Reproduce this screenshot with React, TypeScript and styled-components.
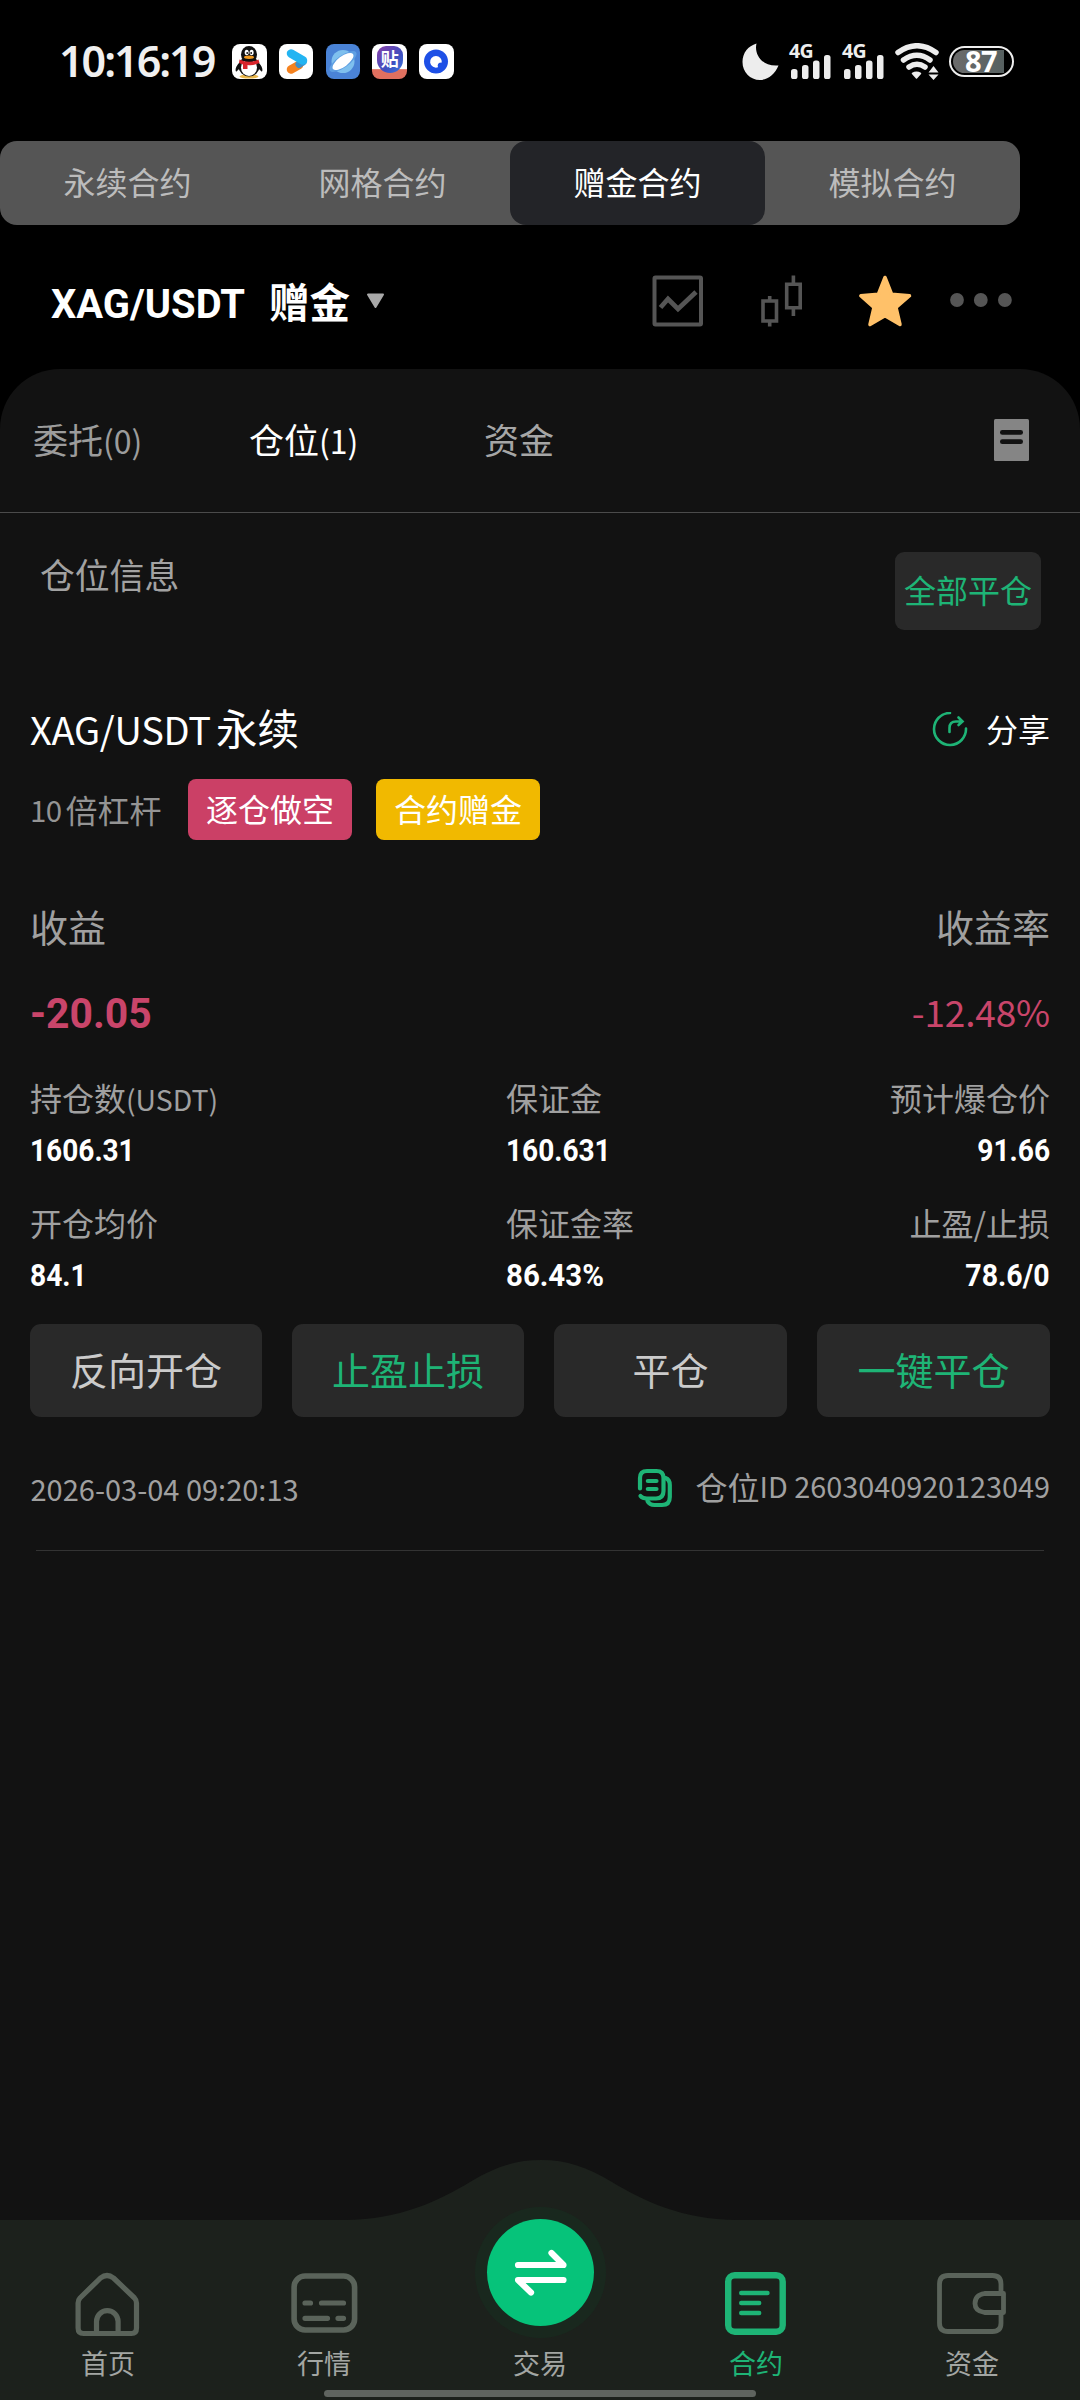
import React from "react";
import styled, { createGlobalStyle } from "styled-components";

const GREEN = "#1eb476";
const ROSE = "#c9456a";
const NAV_GREY = "#5a635a";

const GlobalStyle = createGlobalStyle`
  * { box-sizing: border-box; }
  html, body { margin: 0; padding: 0; background: #000; }
  body { font-family: "Noto Sans CJK SC", "Noto Sans", sans-serif; }
  svg { display: block; flex: none; }
`;

const Screen = styled.div`
  width: 1080px;
  height: 2400px;
  background: #000;
  display: flex;
  flex-direction: column;
  overflow: hidden;
  white-space: nowrap;
`;

/* ---------- status bar ---------- */

const StatusBar = styled.header`
  height: 122px;
  margin-bottom: 19px;
  padding: 0 66px 0 59px;
  display: flex;
  align-items: center;
  justify-content: space-between;
`;

const StatusGroup = styled.div<{ $gap: number }>`
  display: flex;
  align-items: center;
  gap: ${(p) => p.$gap}px;
`;

const Clock = styled.span`
  width: 161px;
  font: 600 43px/60px "Noto Sans", sans-serif;
  letter-spacing: -2px;
  color: #f0f0f0;
`;

const AppIcons = styled.div`
  display: flex;
  gap: 12.3px;
  margin-left: 12px;
`;

const AppTile = styled.span<{ $bg: string }>`
  width: 34.5px;
  height: 35px;
  border-radius: 8px;
  background: ${(p) => p.$bg};
  overflow: hidden;
  display: flex;
  align-items: center;
  justify-content: center;
`;

const ForumMark = styled.span`
  width: 26px;
  height: 27px;
  margin-top: -3px;
  border-radius: 9px 9px 13px 13px;
  background: linear-gradient(135deg, #8a3fa8, #3f4fc0 60%, #3a7bdf);
  color: #fff;
  font: 700 18px/25px "Noto Sans CJK SC", sans-serif;
  text-align: center;
`;

const Signal = styled.div`
  width: 43px;
  height: 36px;
  position: relative;
  svg { margin: 0 0 0 1.5px; }
`;

const SignalTag = styled.span`
  position: absolute;
  left: 0;
  top: -3px;
  font: 700 19.5px/22px "Noto Sans", sans-serif;
  letter-spacing: -0.7px;
  color: #eee;
`;

const Battery = styled.span`
  width: 65px;
  height: 31px;
  border: 2px solid #eee;
  border-radius: 16px;
  padding: 2px;
  display: flex;
`;

const BatteryFill = styled.span`
  width: 51px;
  border-radius: 12px 0 0 12px;
  background: linear-gradient(90deg, #6b6b6b, #566060);
  font: 700 29px/22px "Noto Sans", sans-serif;
  letter-spacing: -0.5px;
  padding-left: 12px;
  color: #fff;
`;

/* ---------- contract tabs ---------- */

const ContractTabs = styled.nav`
  width: 1020px;
  height: 84px;
  flex: none;
  display: flex;
  border-radius: 17px;
  background: #555;
  overflow: hidden;
`;

const ContractTab = styled.div<{ $active?: boolean }>`
  flex: 1;
  display: flex;
  align-items: center;
  justify-content: center;
  padding-bottom: 4px;
  font-size: 32px;
  line-height: 48px;
  border-radius: 16px;
  color: ${(p) => (p.$active ? "#fff" : "#bcbcbc")};
  background: ${(p) => (p.$active ? "#232428" : "transparent")};
`;

/* ---------- pair header ---------- */

const PairBar = styled.div`
  height: 144px;
  flex: none;
  padding: 8px 67px 0 51px;
  display: flex;
  align-items: center;
  justify-content: space-between;
`;

const Pair = styled.div`
  display: flex;
  align-items: center;
  color: #fff;
`;

const Condensed = styled.span<{ $size: number; $scale: number; $right?: boolean; $color?: string }>`
  display: inline-block;
  font-family: Roboto, "Liberation Sans", sans-serif;
  font-weight: 700;
  font-size: ${(p) => p.$size}px;
  line-height: 40px;
  color: ${(p) => p.$color ?? "#fff"};
  transform: scaleX(${(p) => p.$scale});
  transform-origin: ${(p) => (p.$right ? "right" : "left")} center;
`;

const PairCode = styled.div`
  width: 218px;
  padding-top: 5px;
`;

const PairKind = styled.span`
  font-weight: 700;
  font-size: 40.5px;
  line-height: 60px;
  margin-right: 16px;
  padding-bottom: 1px;
`;

const Tools = styled.div`
  display: flex;
  align-items: center;
`;

/* ---------- panel ---------- */

const Panel = styled.main`
  flex: 1;
  background: #121212;
  border-radius: 60px 60px 0 0;
  display: flex;
  flex-direction: column;
`;

const PanelTabs = styled.div`
  height: 144px;
  flex: none;
  border-bottom: 1.5px solid #4b4b4b;
  padding: 0 51px 0 33px;
  display: flex;
  align-items: center;
`;

const PanelTab = styled.div<{ $color: string; $width: number }>`
  width: ${(p) => p.$width}px;
  padding-bottom: 4px;
  font-size: 35px;
  line-height: 52px;
  color: ${(p) => p.$color};
`;

const Count = styled.span`
  font-size: 32px;
  line-height: 40px;
`;

const DocSlot = styled.div`
  margin: -1px 0 0 auto;
`;

const SectionHead = styled.div`
  height: 117px;
  padding: 39px 39px 0 40px;
  display: flex;
  justify-content: space-between;
  align-items: flex-start;
`;

const SectionTitle = styled.h2`
  margin: -2px 0 0;
  font-size: 34.8px;
  font-weight: 400;
  line-height: 48px;
  color: #a2a2a2;
`;

const CloseAll = styled.button`
  width: 146px;
  height: 78px;
  padding: 0 0 4px;
  border: 0;
  border-radius: 9px;
  background: #292929;
  color: ${GREEN};
  font: 400 32px/48px "Noto Sans CJK SC", sans-serif;
`;

const Card = styled.section`
  padding: 70px 30px 0;
  display: flex;
  flex-direction: column;
`;

const Row = styled.div<{ $h: number; $mt?: number }>`
  height: ${(p) => p.$h}px;
  margin-top: ${(p) => p.$mt ?? 0}px;
  display: flex;
  align-items: center;
  justify-content: space-between;
`;

const Title = styled.h3`
  margin: 0;
  padding-bottom: 6px;
  font-size: 41.5px;
  font-weight: 400;
  line-height: 60px;
  color: #fff;
  display: flex;
  align-items: center;
`;

const TitleCode = styled.span`
  font-size: 38px;
  letter-spacing: -0.3px;
  width: 186px;
  padding-top: 3px;
`;

const IconLabel = styled.div<{ $gap: number }>`
  display: flex;
  align-items: center;
  gap: ${(p) => p.$gap}px;
`;

const ShareText = styled.span`
  padding-bottom: 4px;
  font-size: 32px;
  line-height: 48px;
  color: #fff;
`;

const Tags = styled.div`
  height: 61px;
  margin-top: 19px;
  display: flex;
  align-items: center;
`;

const Leverage = styled.span`
  display: flex;
  gap: 4px;
  width: 158px;
  padding-bottom: 2px;
  font-size: 32px;
  line-height: 48px;
  color: #949494;
`;

const LeverageNumber = styled.span`
  font-size: 29.5px;
  letter-spacing: -0.6px;
`;

const Tag = styled.span<{ $bg: string }>`
  width: 164px;
  height: 61px;
  margin-right: 24px;
  border-radius: 8px;
  background: ${(p) => p.$bg};
  color: #fff;
  font-size: 32px;
  line-height: 58px;
  text-align: center;
`;

const ProfitLabel = styled.span`
  padding-bottom: 3px;
  font-size: 38px;
  line-height: 50px;
  color: #a0a0a0;
`;

const Profit = styled.div`
  display: flex;
  padding-top: 3px;
`;

const Rate = styled.span`
  font-size: 37px;
  letter-spacing: -0.15px;
  line-height: 60px;
  padding-bottom: 2px;
  color: ${ROSE};
`;

const Stats = styled.div`
  margin-top: 35px;
  display: grid;
  grid-template-columns: 476px 1fr 1fr;
  row-gap: 31px;
`;

const Stat = styled.div<{ $right?: boolean }>`
  height: 94px;
  display: flex;
  flex-direction: column;
  gap: 14px;
  align-items: ${(p) => (p.$right ? "flex-end" : "flex-start")};
`;

const StatLabel = styled.span`
  height: 40px;
  font-size: 32px;
  line-height: 40px;
  color: #a0a0a0;
`;

const Small = styled.span<{ $size: number }>`
  font-size: ${(p) => p.$size}px;
  line-height: 30px;
`;

const Actions = styled.div`
  margin-top: 28px;
  height: 93px;
  display: grid;
  grid-template-columns: 232px 232px 233px 233px;
  column-gap: 30px;
`;

const Action = styled.button<{ $accent?: boolean }>`
  border: 0;
  padding: 0 0 4px;
  border-radius: 11px;
  background: #292929;
  color: ${(p) => (p.$accent ? GREEN : "#cbcbcb")};
  font: 400 38px/56px "Noto Sans CJK SC", sans-serif;
`;

const Stamp = styled.span`
  padding: 0 0 0 0.5px;
  font-size: 29px;
  line-height: 40px;
  color: #a0a0a0;
`;

const PositionId = styled.span`
  padding-bottom: 4px;
  display: flex;
  align-items: center;
  font-size: 32px;
  line-height: 40px;
  color: #a0a0a0;
`;

const Divider = styled.div`
  height: 1px;
  margin: 32px 6px 0;
  background: #333;
`;

/* ---------- bottom navigation ---------- */

const BottomNav = styled.nav`
  height: 240px;
  margin-top: -240px;
  flex: none;
  position: relative;
`;

const NavShape = styled.svg`
  position: absolute;
  inset: 0;
`;

const NavItems = styled.div`
  position: relative;
  height: 230px;
  display: grid;
  grid-template-columns: repeat(5, 1fr);
`;

const NavItem = styled.div<{ $active?: boolean; $raised?: boolean }>`
  padding-top: ${(p) => (p.$raised ? 59 : 108)}px;
  display: flex;
  flex-direction: column;
  align-items: center;
  gap: ${(p) => (p.$raised ? 18 : 4)}px;
  font-size: 27px;
  line-height: 38px;
  color: ${(p) => (p.$active ? GREEN : "#a3a6a3")};
`;

const TradeButton = styled.span`
  width: 107px;
  height: 107px;
  margin-left: 1px;
  border-radius: 50%;
  background: #06c37a;
  box-shadow: 0 0 0 12px rgba(10, 90, 50, 0.13);
  display: flex;
  align-items: center;
  justify-content: center;
`;

const HomeBar = styled.div`
  position: relative;
  width: 432px;
  height: 7px;
  margin: 0 auto;
  border-radius: 4px;
  background: #5f645f;
`;

/* ---------- drawings ---------- */

const PenguinIcon = () => (
  <svg width="34" height="35" viewBox="0 0 34 35">
    <ellipse cx="17" cy="32.5" rx="9.5" ry="2" fill="#e8b64a" />
    <path d="M7 19C3 23 3 28 4.500 27.500L8 24ZM27 19C31 23 31 28 29.500 27.500L26 24Z" fill="#111" />
    <ellipse cx="17" cy="22.500" rx="10.500" ry="10" fill="#111" />
    <ellipse cx="17" cy="23.500" rx="8" ry="8.500" fill="#fff" />
    <ellipse cx="17" cy="10.500" rx="8" ry="8.500" fill="#111" />
    <ellipse cx="14.700" cy="8.500" rx="2" ry="2.800" fill="#fff" />
    <ellipse cx="19.600" cy="8.500" rx="2" ry="2.800" fill="#fff" />
    <circle cx="15.200" cy="9" r="0.900" fill="#111" />
    <circle cx="19.200" cy="9" r="0.900" fill="#111" />
    <ellipse cx="17" cy="13.200" rx="5" ry="1.700" fill="#f29a1f" />
    <path d="M7.500 15.500Q17 20 26.500 15.500L27.500 19Q21 22 15.500 21V25H11V20.500L7 19Z" fill="#d8242b" />
  </svg>
);

const VideoIcon = () => (
  <svg width="34" height="35" viewBox="0 0 34 35" fill="none" strokeLinecap="round" strokeWidth="8.500">
    <path d="M12 25.500L20 21" stroke="#f5821f" />
    <path d="M20 20.500L24 18" stroke="#3d8fc8" strokeWidth="7" />
    <path d="M12 9.500L24 16.500" stroke="#22b4f2" />
  </svg>
);

const BrowserIcon = () => (
  <svg width="34" height="35" viewBox="0 0 34 35">
    <circle cx="17" cy="17.500" r="11.500" fill="#7fc0ee" />
    <ellipse cx="17" cy="17.500" rx="16" ry="6" transform="rotate(-35 17 17.500)" fill="#5f9fe2" />
    <ellipse cx="17" cy="17.500" rx="12.500" ry="5.200" transform="rotate(-37 17 17.500)" fill="#fff" />
  </svg>
);

const QuarkIcon = () => (
  <svg width="34" height="35" viewBox="0 0 34 35">
    <circle cx="17" cy="17.500" r="12" fill="#1d4fe6" />
    <path d="M17 12A5.800 5.800 0 1 0 19 23.200Q17.500 18.500 22.800 18.500A5.800 5.800 0 0 0 17 12Z" fill="#fff" />
  </svg>
);

const MoonIcon = () => (
  <svg width="37" height="37" viewBox="0 0 37 37">
    <path d="M14.500 0.500C12 10 19 24 36.500 22.500C33 31 26 37 18 37C8 37 0.500 29 0.500 19C0.500 10 6 3 14.500 0.500Z" fill="#ededed" />
  </svg>
);

const SignalBars = () => (
  <svg width="41" height="36" viewBox="0 0 41 36" fill="#ededed">
    <rect x="0" y="26" width="6.500" height="10" rx="2.600" />
    <rect x="11" y="22" width="6.500" height="14" rx="2.600" />
    <rect x="22" y="17.500" width="6.500" height="18.500" rx="2.600" />
    <rect x="33" y="12" width="6.500" height="24" rx="2.600" />
  </svg>
);

const WifiIcon = () => (
  <svg width="44" height="37" viewBox="0 0 44 37" fill="none" stroke="#ededed" strokeWidth="5.500" strokeLinecap="round">
    <path d="M3 9.500Q22 -4 41 9.500" />
    <path d="M8.500 17Q22 7.500 35 17" />
    <path d="M14 24Q22 18.500 30 24" />
    <path d="M17.500 30.500L21.500 35L25.500 30.500Q21.500 28 17.500 30.500Z" fill="#ededed" strokeWidth="1.500" strokeLinejoin="round" />
    <path d="M38.500 23L43.500 29.500H33.500ZM38.500 37L33.500 31.500H43.500Z" fill="#ededed" stroke="none" />
  </svg>
);

const Caret = () => (
  <svg width="19" height="16" viewBox="0 0 19 16">
    <path d="M2 1.500H17L9.500 14Z" fill="#a9a9a9" stroke="#a9a9a9" strokeWidth="2" strokeLinejoin="round" />
  </svg>
);

/* Header tools share one coordinate space: line chart, candles, star, overflow dots. */
const ToolIcons = () => (
  <svg width="361" height="52" viewBox="652 275 361 52" fill="none">
    <g stroke="#555">
      <rect x="654.500" y="277.500" width="46.500" height="47" rx="1" strokeWidth="4" />
      <path d="M660.500 307.500L668 299L678 309L696 292" strokeWidth="4.800" />
      <path d="M763 301H776.500V321H763ZM769.700 296V301M769.700 321V326.500" strokeWidth="3.600" />
      <path d="M786.700 284.300H800.200V307.700H786.700ZM793.400 275.500V284M793.400 308V316" strokeWidth="3.600" />
    </g>
    <path
      d="M885 277.500L891.700 294.300L909.500 295.800L896 307.500L900 324.500L885 315.700L870 324.500L874 307.500L860.800 295.800L878.300 294.300Z"
      fill="#ffc169"
      stroke="#ffc169"
      strokeWidth="3.500"
      strokeLinejoin="round"
    />
    <g fill="#555">
      <circle cx="957" cy="300" r="6.900" />
      <circle cx="980.800" cy="300" r="6.900" />
      <circle cx="1004.900" cy="300" r="6.900" />
    </g>
  </svg>
);

const DocIcon = () => (
  <svg width="35" height="42" viewBox="0 0 35 42">
    <rect width="35" height="42" rx="1.500" fill="#858585" />
    <rect x="6" y="11" width="23" height="4.700" rx="2.300" fill="#121212" />
    <rect x="6" y="20.300" width="23" height="4.700" rx="2.300" fill="#121212" />
  </svg>
);

const ShareIcon = () => (
  <svg width="36" height="36" viewBox="932 712 36 36" fill="none" stroke={GREEN} strokeWidth="2.600" strokeLinecap="round">
    <path d="M950 713A16 16 0 1 0 966 728.500" />
    <path d="M949.500 732V728Q949.500 721.500 956 721.500H962M958.500 717.500L962.500 721.400L958.500 725" />
  </svg>
);

const CopyIcon = () => (
  <svg width="36" height="40" viewBox="637 1468 36 40" fill="none" stroke={GREEN} strokeWidth="4.200" strokeLinecap="round">
    <path d="M640 1488.500V1478Q640 1471 647 1471H656.500Q663.500 1471 663.500 1478V1491Q663.500 1498.500 656 1498.500H647Q642.500 1498.500 640.500 1496" />
    <path d="M665.500 1478Q669.800 1479.500 669.800 1485V1497Q669.800 1505 662 1505H654.500Q649.500 1505 647.500 1501" />
    <path d="M647.800 1481H656.500M647.800 1489H656.500" />
  </svg>
);

const HomeIcon = () => (
  <svg width="74" height="72" viewBox="71.500 2268 74 72" fill="none" stroke={NAV_GREY} strokeWidth="5.200" strokeLinejoin="round">
    <path d="M78.600 2303Q78.600 2300 80.500 2298L101 2278Q107.500 2273 114 2278L135 2298Q137 2300 137 2303V2328Q137 2333.500 132 2333.500H84Q78.600 2333.500 78.600 2328Z" />
    <path d="M97 2332V2321.500A10.800 10.800 0 0 1 118.600 2321.500V2332" />
  </svg>
);

const MarketIcon = () => (
  <svg width="74" height="72" viewBox="287.500 2268 74 72" fill="none" stroke={NAV_GREY} strokeWidth="5.600" strokeLinecap="round">
    <rect x="294.600" y="2276" width="60.500" height="54" rx="11" />
    <path d="M305.500 2303H311M322 2303H344M305.500 2318.300H328M338.500 2318.300H344" strokeWidth="5.200" />
  </svg>
);

const SwapIcon = () => (
  <svg width="60" height="50" viewBox="511 2248 60 50" fill="none" stroke="#fff" strokeWidth="6.200" strokeLinecap="round" strokeLinejoin="round">
    <path d="M518 2265H563.500L551.500 2253" />
    <path d="M563.500 2280H518L531 2292.500" />
  </svg>
);

const ContractIcon = () => (
  <svg width="74" height="72" viewBox="719 2268 74 72" fill="none" stroke={GREEN} strokeWidth="6.400" strokeLinecap="round">
    <rect x="728.200" y="2275.200" width="54.500" height="56.500" rx="6.500" />
    <path d="M741.200 2293H767.500M741.200 2303H759.200M741.200 2313H759.200" strokeWidth="4.400" />
  </svg>
);

const WalletIcon = () => (
  <svg width="74" height="72" viewBox="935 2268 74 72" fill="none" stroke={NAV_GREY} strokeWidth="4.800" strokeLinejoin="round">
    <path d="M1001 2293V2284Q1001 2275.500 992.500 2275.500H948Q939.500 2275.500 939.500 2284V2323Q939.500 2331.500 948 2331.500H992.500Q1001 2331.500 1001 2323V2314" />
    <path d="M1003.500 2293.500H984.500Q975 2295 975 2303.500Q975 2311 984.500 2312.500H1003.500Z" />
  </svg>
);

/* ---------- data ---------- */

const contractTabs = ["永续合约", "网格合约", "赠金合约", "模拟合约"];

const stats: { label: string; unit?: string; value: string; scale?: number; right?: boolean }[] = [
  { label: "持仓数", unit: "(USDT)", value: "1606.31" },
  { label: "保证金", value: "160.631" },
  { label: "预计爆仓价", value: "91.66", scale: 0.91, right: true },
  { label: "开仓均价", value: "84.1", scale: 0.91 },
  { label: "保证金率", value: "86.43%", scale: 0.95 },
  { label: "止盈/止损", value: "78.6/0", scale: 0.92, right: true },
];

const actions = [
  { text: "反向开仓" },
  { text: "止盈止损", accent: true },
  { text: "平仓" },
  { text: "一键平仓", accent: true },
];

export default function App() {
  return (
    <Screen>
      <GlobalStyle />
      <StatusBar>
        <StatusGroup $gap={0}>
          <Clock>10:16:19</Clock>
          <AppIcons>
            <AppTile $bg="#fff"><PenguinIcon /></AppTile>
            <AppTile $bg="#fff"><VideoIcon /></AppTile>
            <AppTile $bg="#4a83d6"><BrowserIcon /></AppTile>
            <AppTile $bg="linear-gradient(#fff 72%, #e0705f 73%)"><ForumMark>贴</ForumMark></AppTile>
            <AppTile $bg="#fff"><QuarkIcon /></AppTile>
          </AppIcons>
        </StatusGroup>
        <StatusGroup $gap={10}>
          <MoonIcon />
          <Signal><SignalTag>4G</SignalTag><SignalBars /></Signal>
          <Signal><SignalTag>4G</SignalTag><SignalBars /></Signal>
          <WifiIcon />
          <Battery><BatteryFill>87</BatteryFill></Battery>
        </StatusGroup>
      </StatusBar>

      <ContractTabs>
        {contractTabs.map((t, i) => (
          <ContractTab key={t} $active={i === 2}>{t}</ContractTab>
        ))}
      </ContractTabs>

      <PairBar>
        <Pair>
          <PairCode><Condensed $size={41} $scale={0.973}>XAG/USDT</Condensed></PairCode>
          <PairKind>赠金</PairKind>
          <Caret />
        </Pair>
        <Tools><ToolIcons /></Tools>
      </PairBar>

      <Panel>
        <PanelTabs>
          <PanelTab $width={216} $color="#9c9c9c">委托<Count>(0)</Count></PanelTab>
          <PanelTab $width={235} $color="#fff">仓位<Count>(1)</Count></PanelTab>
          <PanelTab $width={80} $color="#a6a6a6">资金</PanelTab>
          <DocSlot><DocIcon /></DocSlot>
        </PanelTabs>

        <SectionHead>
          <SectionTitle>仓位信息</SectionTitle>
          <CloseAll>全部平仓</CloseAll>
        </SectionHead>

        <Card>
          <Row $h={60}>
            <Title><TitleCode>XAG/USDT</TitleCode>永续</Title>
            <IconLabel $gap={18}><ShareIcon /><ShareText>分享</ShareText></IconLabel>
          </Row>
          <Tags>
            <Leverage><LeverageNumber>10</LeverageNumber>倍杠杆</Leverage>
            <Tag $bg="#cb4066">逐仓做空</Tag>
            <Tag $bg="#f1b900">合约赠金</Tag>
          </Tags>
          <Row $h={50} $mt={62}>
            <ProfitLabel>收益</ProfitLabel>
            <ProfitLabel>收益率</ProfitLabel>
          </Row>
          <Row $h={60} $mt={30}>
            <Profit><Condensed $size={42} $scale={0.973} $color={ROSE}>-20.05</Condensed></Profit>
            <Rate>-12.48%</Rate>
          </Row>
          <Stats>
            {stats.map((s) => (
              <Stat key={s.label} $right={s.right}>
                <StatLabel>{s.label}{s.unit && <Small $size={28.4}>{s.unit}</Small>}</StatLabel>
                <Condensed $size={31} $scale={s.scale ?? 0.905} $right={s.right}>{s.value}</Condensed>
              </Stat>
            ))}
          </Stats>
          <Actions>
            {actions.map((a) => (
              <Action key={a.text} $accent={a.accent}>{a.text}</Action>
            ))}
          </Actions>
          <Row $h={60} $mt={41}>
            <Stamp>2026-03-04 09:20:13</Stamp>
            <IconLabel $gap={23}>
              <CopyIcon />
              <PositionId>仓位<Small $size={28.8}>ID 2603040920123049</Small></PositionId>
            </IconLabel>
          </Row>
          <Divider />
        </Card>
      </Panel>

      <BottomNav>
        <NavShape width="1080" height="240" viewBox="0 2160 1080 240">
          <path
            d="M0 2220H345C400 2220 440 2200 470 2182C495 2167 515 2160 541 2160C567 2160 587 2167 612 2182C642 2200 682 2220 737 2220H1080V2400H0Z"
            fill="#1c211c"
          />
        </NavShape>
        <NavItems>
          <NavItem><HomeIcon />首页</NavItem>
          <NavItem><MarketIcon />行情</NavItem>
          <NavItem $raised><TradeButton><SwapIcon /></TradeButton>交易</NavItem>
          <NavItem $active><ContractIcon />合约</NavItem>
          <NavItem><WalletIcon />资金</NavItem>
        </NavItems>
        <HomeBar />
      </BottomNav>
    </Screen>
  );
}
